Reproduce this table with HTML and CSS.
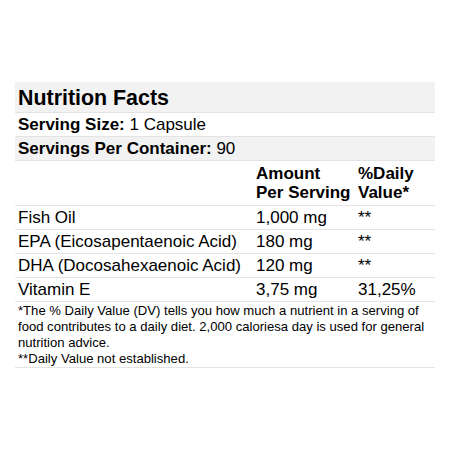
FILE: index.html
```html
<!DOCTYPE html>
<html lang="en">
<head>
    <meta charset="UTF-8">
    <meta name="viewport" content="width=device-width, initial-scale=1.0">
    <title>Nutrition Facts</title>
    <link rel="stylesheet" href="styles.css">
</head>
<body>
    <div class="label">
        <table class="facts">
            <colgroup>
                <col class="col-name">
                <col class="col-amount">
                <col class="col-dv">
            </colgroup>
            <tr class="title-row shaded">
                <th colspan="3">Nutrition Facts</th>
            </tr>
            <tr>
                <td colspan="3"><b>Serving Size:</b> 1 Capsule</td>
            </tr>
            <tr class="shaded">
                <td colspan="3"><b>Servings Per Container:</b> 90</td>
            </tr>
            <tr class="head-row">
                <th></th>
                <th>Amount Per Serving</th>
                <th>%Daily Value*</th>
            </tr>
            <tr>
                <td>Fish Oil</td>
                <td>1,000 mg</td>
                <td>**</td>
            </tr>
            <tr>
                <td>EPA (Eicosapentaenoic Acid)</td>
                <td>180 mg</td>
                <td>**</td>
            </tr>
            <tr>
                <td>DHA (Docosahexaenoic Acid)</td>
                <td>120 mg</td>
                <td>**</td>
            </tr>
            <tr>
                <td>Vitamin E</td>
                <td>3,75 mg</td>
                <td>31,25%</td>
            </tr>
            <tr class="note-row">
                <td colspan="3">
                    *The % Daily Value (DV) tells you how much a nutrient in a serving of food contributes to a daily diet. 2,000 caloriesa day is used for general nutrition advice.<br>
                    **Daily Value not established.
                </td>
            </tr>
        </table>
    </div>
</body>
</html>
```

FILE: styles.css
```css
* {
    margin: 0;
    padding: 0;
    box-sizing: border-box;
}

body {
    font-family: "Liberation Sans", Arial, sans-serif;
    color: #000;
    background: #fff;
}

/* label block */
.label {
    padding: 82px 15px 0 15px;
}

.facts {
    width: 420px;
    table-layout: fixed;
    border-collapse: collapse;
    font-size: 17px;
    line-height: 20px;
}

.col-name { width: 238px; }
.col-amount { width: 102px; }
.col-dv { width: 80px; }

.facts th,
.facts td {
    text-align: left;
    vertical-align: top;
    padding: 2px 3px 1px 3px;
    border-bottom: 1px solid #e4e4e4;
}

.shaded {
    background-color: #f2f2f2;
}

/* title */
.title-row th {
    font-size: 21.4px;
    line-height: 25px;
    padding-top: 4px;
    padding-bottom: 1px;
}

.head-row th {
    line-height: 19px;
    padding-top: 3px;
    padding-bottom: 3px;
}

/* footnote */
.note-row td {
    font-size: 13.1px;
    line-height: 16px;
    padding: 1px 5px 0 3px;
}
```
